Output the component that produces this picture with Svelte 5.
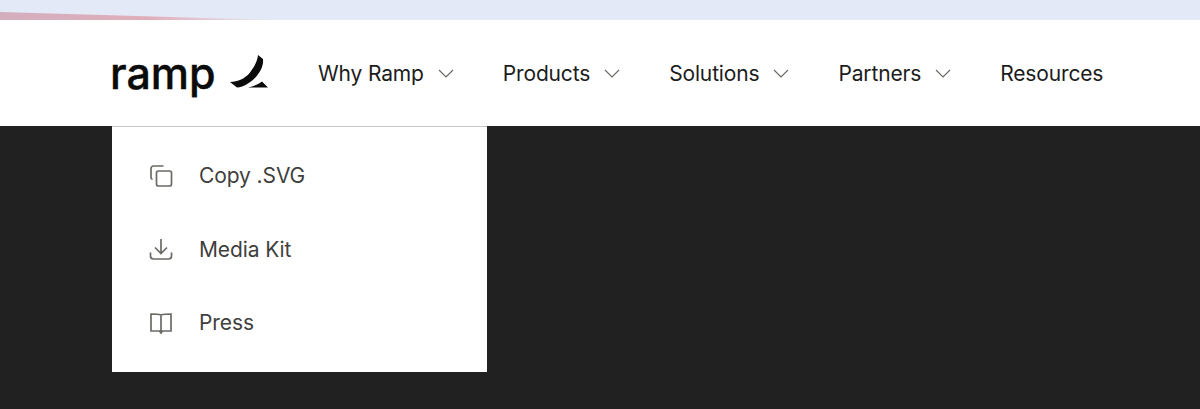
<script lang="ts">
    const navItems = [
        { label: 'Why Ramp', caret: true },
        { label: 'Products', caret: true },
        { label: 'Solutions', caret: true },
        { label: 'Partners', caret: true },
        { label: 'Resources', caret: false },
    ];
</script>

<div class="page">
    <div class="banner"><div class="wedge"></div></div>

    <header class="header">
        <a href="/" class="logo">
            <span class="logo-text">ramp</span>
            <svg class="logo-mark" width="40" height="34" viewBox="0 0 40 34" aria-hidden="true">
                <path d="M29 1L34 5C35 14 28 24 19 29.500C15 32 11 33.500 8 33.500L1 28C9 28 16 24.500 21 18.500C25 13.500 28.500 7 29 1Z" fill="#0b0b0b"/>
                <path d="M19 33.500C24 32.500 29 30.500 33 27.500L39 33.500Z" fill="#0b0b0b"/>
            </svg>
        </a>
        <nav class="nav">
            {#each navItems as item}
                <a href="/" class="nav-item">
                    {item.label}
                    {#if item.caret}
                        <svg width="16" height="9" viewBox="0 0 16 9" fill="none" stroke="#66665f" stroke-width="1.100" aria-hidden="true">
                            <path d="M1 1l7 7 7-7"/>
                        </svg>
                    {/if}
                </a>
            {/each}
        </nav>
    </header>

    <main class="body">
        <div class="menu">
            <a href="/" class="menu-item">
                <svg width="26" height="26" viewBox="0 0 26 26" fill="none" stroke="#6b6b66" stroke-width="1.700" aria-hidden="true">
                    <path d="M15.500 3H5.500A2.500 2.500 0 0 0 3 5.500V14.500C3 15.500 3.500 16 4.500 16.500"/>
                    <rect x="8.500" y="8" width="15" height="15" rx="2"/>
                </svg>
                Copy .SVG
            </a>
            <a href="/" class="menu-item">
                <svg width="26" height="26" viewBox="0 0 26 26" fill="none" stroke="#6b6b66" stroke-width="1.700" aria-hidden="true">
                    <path d="M13 3V17M7 11.500L13 17.500L19 11.500"/>
                    <path d="M2.500 16.500V20A3 3 0 0 0 5.500 23H20.500A3 3 0 0 0 23.500 20V16.500"/>
                </svg>
                Media Kit
            </a>
            <a href="/" class="menu-item">
                <svg width="26" height="26" viewBox="0 0 26 26" fill="none" stroke="#6b6b66" stroke-width="1.700" aria-hidden="true">
                    <path d="M13 5V23M13 5C10 4 7 4 3 4V21H11.500L13 23L14.500 21H23V4C19 4 16 4 13 5Z"/>
                </svg>
                Press
            </a>
        </div>
    </main>
</div>

<style>
    :global(body) {
        margin: 0;
        font-family: Inter, "Liberation Sans", sans-serif;
    }
    .page {
        height: 409px;
        display: flex;
        flex-direction: column;
        overflow: hidden;
    }
    .banner {
        height: 20px;
        background: #e3e9f6;
        position: relative;
    }
    .wedge {
        position: absolute;
        inset: 0;
        width: 270px;
        background: linear-gradient(90deg, #d3aebd, #e0aebb 55%, #e8e6ee);
        clip-path: polygon(0 12px, 100% 20px, 0 20px);
    }
    .header {
        height: 106px;
        background: #fff;
        display: flex;
        align-items: center;
        padding-left: 110px;
    }
    .logo {
        display: flex;
        align-items: center;
        color: #0b0b0b;
        text-decoration: none;
        width: 208px;
    }
    .logo-text {
        width: 119px;
        font-size: 43px;
        font-weight: 500;
        letter-spacing: 0;
        line-height: 1;
        margin-top: 1px;
        -webkit-text-stroke: 0.4px #0b0b0b;
    }
    .logo-mark {
        margin-top: -5px;
    }
    .nav {
        display: flex;
        gap: 49px;
    }
    .nav-item {
        display: flex;
        align-items: center;
        gap: 14px;
        font-size: 21px;
        color: #1c1c1c;
        text-decoration: none;
        letter-spacing: -0.15px;
    }
    .body {
        flex: 1;
        background: #212121;
        position: relative;
    }
    .menu {
        position: absolute;
        top: 0;
        left: 112px;
        width: 375px;
        height: 246px;
        box-sizing: border-box;
        border-top: 1px solid #c8c8c8;
        background: #fff;
        padding: 12px 0 0 36px;
        display: flex;
        flex-direction: column;
    }
    .menu-item {
        height: 73.500px;
        display: flex;
        align-items: center;
        gap: 25px;
        font-size: 21px;
        color: #3f3f3d;
        text-decoration: none;
        letter-spacing: -0.1px;
    }
</style>
